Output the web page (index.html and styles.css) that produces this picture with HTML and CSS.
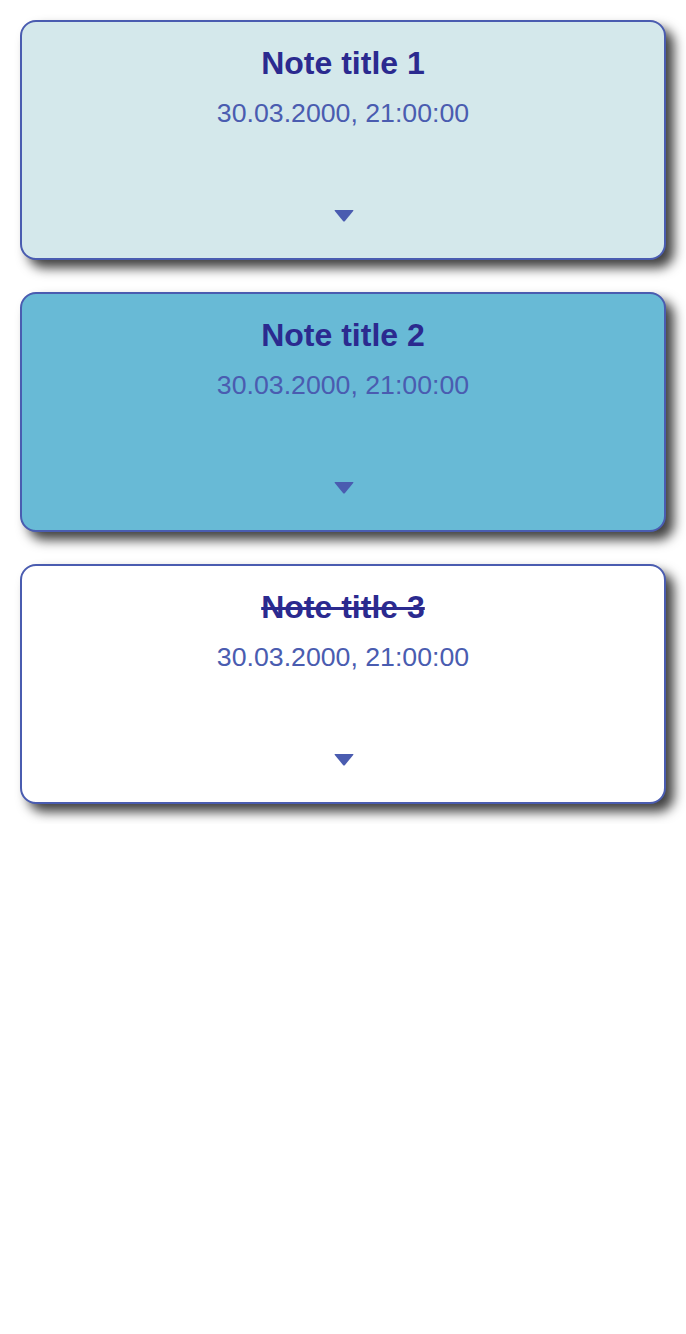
FILE: index.html
```html
<!DOCTYPE html>
<html lang="en">
  <head>
    <meta charset="UTF-8"/>
    <meta name="viewport" content="width=device-width, initial-scale=1.0">
    <title>Notes</title>
    <link rel="stylesheet" href="styles.css">
  </head>
  <body>
    <main class="noteList">
      <div class="noteCard noteCard_light">
        <p class="noteCard_title">Note title 1</p>
        <p class="noteCard_date">30.03.2000, 21:00:00</p>
        <svg class="noteCard_arrow" width="20" height="12" viewBox="0 0 20 12"><path d="M1.2 0 H18.8 Q20 0 19.2 1 L10.8 11.2 Q10 12 9.2 11.2 L0.8 1 Q0 0 1.2 0 Z"/></svg>
      </div>
      <div class="noteCard noteCard_blue">
        <p class="noteCard_title">Note title 2</p>
        <p class="noteCard_date">30.03.2000, 21:00:00</p>
        <svg class="noteCard_arrow" width="20" height="12" viewBox="0 0 20 12"><path d="M1.2 0 H18.8 Q20 0 19.2 1 L10.8 11.2 Q10 12 9.2 11.2 L0.8 1 Q0 0 1.2 0 Z"/></svg>
      </div>
      <div class="noteCard noteCard_white">
        <p class="noteCard_title noteCard_title_done">Note title 3</p>
        <p class="noteCard_date">30.03.2000, 21:00:00</p>
        <svg class="noteCard_arrow" width="20" height="12" viewBox="0 0 20 12"><path d="M1.2 0 H18.8 Q20 0 19.2 1 L10.8 11.2 Q10 12 9.2 11.2 L0.8 1 Q0 0 1.2 0 Z"/></svg>
      </div>
    </main>
  </body>
</html>
```
FILE: styles.css
```css
body {
  margin: 0;
  background-color: white;
  font-family: "Liberation Sans", Arial, sans-serif;
}
.noteList {
  display: flex;
  flex-direction: column;
  gap: 32px;
  padding: 20px 20px;
}
.noteCard {
  box-sizing: border-box;
  height: 240px;
  border: 2px solid rgb(74, 92, 176);
  border-radius: 16px;
  box-shadow: 8px 8px 12px rgba(0, 0, 0, 0.75);
  display: flex;
  flex-direction: column;
  align-items: center;
  padding: 23px 0 36px 0;
}
.noteCard_light {
  background-color: rgb(212, 232, 235);
}
.noteCard_blue {
  background-color: rgb(104, 186, 214);
}
.noteCard_white {
  background-color: white;
}
  .noteCard_title {
    margin: 0;
    font-size: 32px;
    font-weight: bold;
    color: rgb(43, 42, 143);
  }
  .noteCard_title_done {
    text-decoration: line-through;
  }
  .noteCard_date {
    margin: 16px 0 0 0;
    font-size: 26.7px;
    color: rgb(74, 92, 176);
  }
  .noteCard_arrow {
    margin-top: auto;
    margin-left: 2px;
    fill: rgb(74, 92, 176);
  }
```
